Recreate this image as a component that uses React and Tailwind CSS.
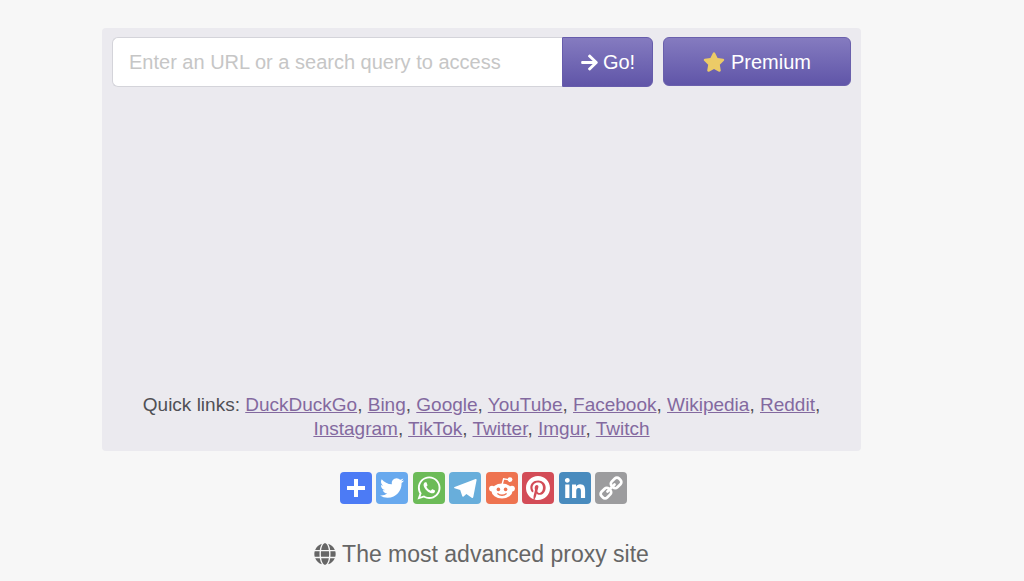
import { FaArrowRight, FaGlobe, FaStar } from "react-icons/fa";

const QUICK_LINKS = [
  { name: "DuckDuckGo", href: "https://duckduckgo.com" },
  { name: "Bing", href: "https://www.bing.com" },
  { name: "Google", href: "https://www.google.com" },
  { name: "YouTube", href: "https://www.youtube.com" },
  { name: "Facebook", href: "https://www.facebook.com" },
  { name: "Wikipedia", href: "https://www.wikipedia.org" },
  { name: "Reddit", href: "https://www.reddit.com" },
  { name: "Instagram", href: "https://www.instagram.com" },
  { name: "TikTok", href: "https://www.tiktok.com" },
  { name: "Twitter", href: "https://twitter.com" },
  { name: "Imgur", href: "https://imgur.com" },
  { name: "Twitch", href: "https://www.twitch.tv" },
];

const SHARE_LINKS = [
  {
    label: "Share",
    color: "bg-[#4c7bf5]",
    icon: <path d="M14 7h4v18h-4z M7 14h18v4H7z" />,
  },
  {
    label: "Twitter",
    color: "bg-[#68a9ee]",
    icon: (
      <path d="M28 8.557a10 10 0 0 1-2.828.775 4.93 4.93 0 0 0 2.166-2.725 9.7 9.7 0 0 1-3.13 1.194 4.92 4.92 0 0 0-3.593-1.55 4.924 4.924 0 0 0-4.794 6.049c-4.09-.21-7.72-2.17-10.15-5.15a4.94 4.94 0 0 0-.665 2.477c0 1.71.87 3.214 2.19 4.1a5 5 0 0 1-2.23-.616v.06c0 2.39 1.7 4.38 3.952 4.83-.414.115-.85.174-1.297.174q-.476-.001-.928-.086a4.935 4.935 0 0 0 4.6 3.42 9.9 9.9 0 0 1-6.114 2.107q-.597 0-1.175-.068a13.95 13.95 0 0 0 7.55 2.213c9.056 0 14.01-7.507 14.01-14.013q0-.32-.015-.637c.96-.695 1.795-1.56 2.455-2.55z" />
    ),
  },
  {
    label: "WhatsApp",
    color: "bg-[#6cbb58]",
    icon: (
      <path d="M16.21 4.41C9.973 4.41 4.917 9.465 4.917 15.7c0 2.134.592 4.13 1.62 5.832L4.5 27.59l6.25-2.002a11.24 11.24 0 0 0 5.46 1.404c6.234 0 11.29-5.055 11.29-11.29 0-6.237-5.056-11.292-11.29-11.292m0 20.69c-1.91 0-3.69-.57-5.173-1.553l-3.61 1.156 1.173-3.49a9.35 9.35 0 0 1-1.79-5.512c0-5.18 4.217-9.4 9.4-9.4s9.397 4.22 9.397 9.4c0 5.188-4.214 9.4-9.398 9.4zm5.293-6.832c-.284-.155-1.673-.906-1.934-1.012-.265-.106-.455-.16-.658.12s-.78.91-.954 1.096c-.176.186-.345.203-.628.048-.282-.154-1.2-.494-2.264-1.517-.83-.795-1.373-1.76-1.53-2.055s0-.445.15-.584c.134-.124.3-.326.45-.488.15-.163.203-.28.306-.47.104-.19.06-.36-.005-.506-.066-.147-.59-1.587-.81-2.173-.218-.586-.46-.498-.63-.505-.168-.007-.358-.038-.55-.045-.19-.007-.51.054-.78.332-.277.274-1.05.943-1.1 2.362-.055 1.418.926 2.826 1.064 3.023.137.2 1.874 3.272 4.76 4.537 2.888 1.264 2.9.878 3.43.85.53-.027 1.734-.633 2-1.297s.287-1.24.22-1.363c-.07-.123-.26-.203-.54-.357z" />
    ),
  },
  {
    label: "Telegram",
    color: "bg-[#68aedb]",
    icon: (
      <path d="M26.6 7 5.6 15.1c-.7.3-.7 1 0 1.2l5.6 1.8 2 6c.3.9.8.9 1.4.4l2.8-2.6 5.3 3.9c.8.5 1.4.2 1.6-.7l3.3-17.1c.1-.8-.3-1.2-1-1z" />
    ),
  },
  {
    label: "Reddit",
    color: "bg-[#ee7350]",
    icon: (
      <>
        <ellipse cx="16" cy="19" rx="10.5" ry="7.6" />
        <circle cx="6" cy="16.6" r="2.9" />
        <circle cx="26" cy="16.6" r="2.9" />
        <circle cx="24" cy="7.6" r="2.4" />
        <path d="M16 13l1.6-6.2 6 1.1" fill="none" stroke="#fff" strokeWidth="1.4" />
        <circle cx="12.4" cy="17.4" r="1.8" fill="#ee7350" />
        <circle cx="19.6" cy="17.4" r="1.8" fill="#ee7350" />
        <path
          d="M11.8 21.8c2.2 1.9 6.2 1.9 8.4 0"
          fill="none"
          stroke="#ee7350"
          strokeWidth="1.3"
          strokeLinecap="round"
        />
      </>
    ),
  },
  {
    label: "Pinterest",
    color: "bg-[#d34c57]",
    icon: (
      <path d="M15.995 4C9.361 4 4 9.37 4 15.995c0 5.084 3.16 9.428 7.622 11.176-.109-.948-.198-2.41.04-3.446.217-.938 1.402-5.963 1.402-5.963s-.356-.72-.356-1.777c0-1.668.968-2.912 2.172-2.912 1.027 0 1.52.77 1.52 1.688 0 1.027-.65 2.567-.996 3.998-.287 1.195.602 2.172 1.777 2.172 2.132 0 3.771-2.25 3.771-5.489 0-2.873-2.063-4.877-5.015-4.877-3.416 0-5.42 2.557-5.42 5.203 0 1.027.395 2.132.888 2.735a.36.36 0 0 1 .08.345c-.09.375-.297 1.195-.336 1.363-.05.217-.178.266-.405.158-1.481-.711-2.409-2.903-2.409-4.66 0-3.781 2.745-7.257 7.928-7.257 4.156 0 7.394 2.962 7.394 6.931 0 4.137-2.606 7.464-6.22 7.464-1.214 0-2.36-.632-2.744-1.383l-.75 2.854c-.267 1.046-.998 2.35-1.491 3.149a12 12 0 0 0 3.554.533C22.629 28 28 22.63 28 16.005 27.99 9.37 22.62 4 15.995 4" />
    ),
  },
  {
    label: "LinkedIn",
    color: "bg-[#498bbe]",
    icon: (
      <path d="M6.227 12.61h4.19v13.48h-4.19zm2.095-6.7a2.43 2.43 0 0 1 0 4.86c-1.344 0-2.428-1.09-2.428-2.43s1.084-2.43 2.428-2.43m4.72 6.7h4.02v1.84h.058c.56-1.058 1.927-2.176 3.965-2.176 4.238 0 5.02 2.792 5.02 6.42v7.395h-4.183v-6.56c0-1.564-.03-3.574-2.178-3.574-2.18 0-2.514 1.7-2.514 3.46v6.668h-4.187z" />
    ),
  },
  {
    label: "Copy link",
    color: "bg-[#9c9c9e]",
    icon: (
      <g transform="rotate(-45 16 16)" fill="none" stroke="#fff" strokeWidth="2.7">
        <rect x="3.6" y="12" width="10.4" height="8" rx="3" />
        <rect x="18" y="12" width="10.4" height="8" rx="3" />
        <path d="M11 16h10" strokeLinecap="round" />
      </g>
    ),
  },
];

function ProxyForm() {
  return (
    <div className="flex gap-[10px]">
      <form className="flex min-w-0 flex-1" onSubmit={(e) => e.preventDefault()}>
        <input
          type="text"
          aria-label="Enter an URL or a search query to access"
          placeholder="Enter an URL or a search query to access"
          className="h-[50px] min-w-0 flex-1 rounded-l-md border border-r-0 border-[#d4d4da] bg-white px-4 text-[20px] text-[#555555] outline-none placeholder:text-[#c6c6c6]"
        />
        <button
          type="submit"
          className="flex h-[50px] w-[91px] items-center justify-center gap-1 rounded-r-md border border-[#665cab] bg-linear-to-b from-[#857bc0] to-[#6055a8] text-[20px] text-white"
        >
          <FaArrowRight className="size-[19px]" />
          Go!
        </button>
      </form>
      <a
        href="#premium"
        className="flex h-[49px] w-[188px] items-center justify-center gap-[6px] rounded-md border border-[#6a60ac] bg-linear-to-b from-[#857bc0] to-[#6055a8] text-[20px] text-white"
      >
        <FaStar className="size-[22px] text-[#eccb67]" />
        Premium
      </a>
    </div>
  );
}

function QuickLinks() {
  return (
    <p className="px-5 text-center text-[19px] leading-6 text-[#505055]">
      Quick links:{" "}
      {QUICK_LINKS.map((link, i) => (
        <span key={link.name}>
          <a href={link.href} className="text-[#83699f] underline">
            {link.name}
          </a>
          {i < QUICK_LINKS.length - 1 && ", "}
        </span>
      ))}
    </p>
  );
}

function ShareBar() {
  return (
    <div className="mx-auto flex w-[288px] justify-between">
      {SHARE_LINKS.map((item) => (
        <a
          key={item.label}
          href="#share"
          aria-label={item.label}
          className={`size-8 rounded ${item.color}`}
        >
          <svg viewBox="0 0 32 32" className="size-8" fill="#fff">
            {item.icon}
          </svg>
        </a>
      ))}
    </div>
  );
}

export default function App() {
  return (
    <div className="min-h-screen bg-[#f7f7f7] pt-7 pr-[61px] font-['Liberation_Sans',Arial,sans-serif]">
      <main className="mx-auto max-w-[759px]">
        <section className="flex min-h-[423px] flex-col justify-between rounded bg-[#ebeaef] px-[10px] pt-[9px] pb-[10px]">
          <ProxyForm />
          <QuickLinks />
        </section>

        <div className="pt-[21px] pl-1">
          <ShareBar />
        </div>

        <h1 className="mt-9 flex items-center justify-center gap-[6px] text-[23px] leading-7 text-[#666666]">
          <FaGlobe className="size-[22px]" />
          The most advanced proxy site
        </h1>
      </main>
    </div>
  );
}
